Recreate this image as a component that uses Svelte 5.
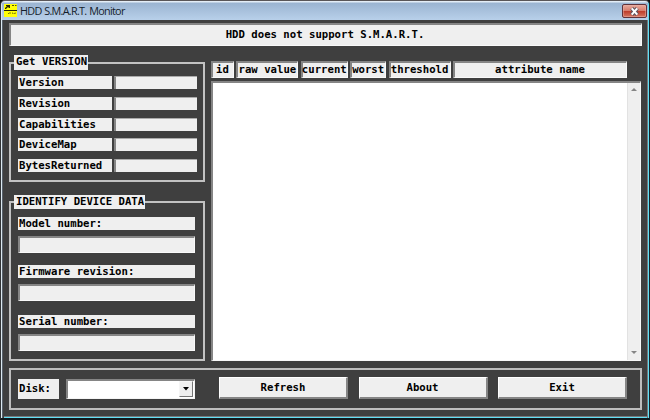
<script>
  const versionRows = ['Version', 'Revision', 'Capabilities', 'DeviceMap', 'BytesReturned'];
  const identity = ['Model number:', 'Firmware revision:', 'Serial number:'];
  const columns = ['id', 'raw value', 'current', 'worst', 'threshold', 'attribute name'];
  const buttons = ['Refresh', 'About', 'Exit'];
</script>

<div class="window">
  <header>
    <svg class="logo" width="14" height="14" viewBox="0 0 14 14">
      <rect width="13" height="13" fill="#ffff08" />
      <path d="M0 6.5H13" stroke="#222200" />
      <path d="M2 1H6V4H5L4 3L2 5H1V4L3 2H2Z" fill="#282800" />
      <path d="M8 1.5H10M11 1.5H12.5" stroke="#555500" />
      <path d="M4 10L5 9H7M8 9H9V10M10 9.5L12 9" fill="none" stroke="#77770a" />
    </svg>
    <span class="title">HDD S.M.A.R.T. Monitor</span>
    <button class="close" aria-label="Close">
      <svg width="11" height="9" viewBox="0 0 11 9">
        <path d="M2.7 1.4L8.3 7.6M8.3 1.4L2.7 7.6" stroke="#5c5560" stroke-width="4" />
        <path d="M2.7 1.4L8.3 7.6M8.3 1.4L2.7 7.6" stroke="#fff" stroke-width="2.1" />
      </svg>
    </button>
  </header>
  <main>
    <div class="status sunken">HDD does not support S.M.A.R.T.</div>
    <div class="middle">
      <div class="left">
        <section class="group version">
          <h2>Get VERSION</h2>
          {#each versionRows as row}
            <div class="row">
              <span class="label">{row}</span>
              <span class="value"></span>
            </div>
          {/each}
        </section>
        <section class="group identify">
          <h2>IDENTIFY DEVICE DATA</h2>
          {#each identity as name}
            <div class="item">
              <div class="label">{name}</div>
              <div class="field sunken"></div>
            </div>
          {/each}
        </section>
      </div>
      <div class="right">
        <div class="columns">
          {#each columns as column}
            <div class="sunken">{column}</div>
          {/each}
        </div>
        <div class="list sunken">
          <div class="scrollbar">
            <svg width="6" height="3" viewBox="0 0 6 3"><path d="M0 3L3 0L6 3Z" fill="#858585" /></svg>
            <svg width="6" height="3" viewBox="0 0 6 3"><path d="M0 0H6L3 3Z" fill="#858585" /></svg>
          </div>
        </div>
      </div>
    </div>
    <footer>
      <span class="disk">Disk:</span>
      <div class="combo">
        <span class="arrow">
          <svg width="6" height="4" viewBox="0 0 6 4"><path d="M0 0H6L3 3.6Z" fill="#000" /></svg>
        </span>
      </div>
      <div class="actions">
        {#each buttons as text}
          <button>{text}</button>
        {/each}
      </div>
    </footer>
  </main>
</div>

<style>
  :global(body) {
    margin: 0;
    background: #111;
  }
  * {
    box-sizing: border-box;
  }
  .window {
    width: 650px;
    height: 420px;
    display: flex;
    flex-direction: column;
    border: 1px solid #303335;
    border-top-color: #5a5658;
    border-bottom: 2px solid #10191d;
    border-right-color: #10272f;
    border-radius: 5px 5px 0 0;
    background: #3f3f3f;
    overflow: hidden;
    font: bold 10.65px/13px 'DejaVu Sans Mono', monospace;
    color: #000;
  }
  header {
    flex: none;
    height: 19px;
    padding: 0 3px;
    display: flex;
    align-items: flex-start;
    background: linear-gradient(#e4edf6 0 1px, #9bb4d1 2px, #b8d0ea);
    border-left: 1px solid #dbe8f4;
    border-right: 1px solid #60dcf5;
  }
  .logo {
    flex: none;
    margin: 3px 0 0 -1px;
  }
  .title {
    margin: 2px 0 0 2px;
    font: 10.8px/15px 'Open Sans', 'Noto Sans', sans-serif;
    letter-spacing: -0.7px;
    word-spacing: 0.6px;
    color: #151d2b;
    flex: 1;
  }
  .close {
    width: 25px;
    height: 14px;
    margin: 3px -2px 0 0;
    padding: 0;
    display: flex;
    align-items: center;
    justify-content: center;
    border: 1px solid #60323a;
    border-radius: 2px;
    background: linear-gradient(#e8aa9d, #d77c6c 48%, #bd3b2a 52%, #d47761);
    box-shadow: inset 0 0 0 1px #e9b0a680;
  }
  main {
    flex: 1;
    padding: 3px 6px 7px 5px;
    border-left: 3px solid #686d72;
    border-image: linear-gradient(to right, #dce9f1 0 1px, #57606a 1px 2px, #3f3f3f 2px) 0 0 0 3;
    box-shadow: inset -1px 0 #62dff4, inset -2px 0 #77777a, inset 0 -1px #62dff4, inset 0 -2px #77777a;
    display: flex;
    flex-direction: column;
  }
  .sunken {
    background: #efefef;
    border: 2px solid;
    border-color: #858585 #f9f9f9 #f9f9f9 #858585;
    border-right-width: 1px;
    border-bottom-width: 1px;
  }
  .status {
    height: 23px;
    text-align: center;
    line-height: 20px;
    flex: none;
    margin-right: 1px;
    padding-right: 2px;
  }
  .middle {
    display: flex;
    gap: 6px;
    margin-top: 9px;
    height: 306px;
    flex: none;
  }
  .left {
    width: 196px;
    display: flex;
    flex-direction: column;
    gap: 12px;
  }
  .group {
    margin-top: 7px;
    border: 2px solid #c2c2c2;
    padding: 0 7px;
  }
  .version {
    height: 120px;
  }
  .identify {
    height: 160px;
  }
  h2 {
    width: max-content;
    height: 15px;
    margin: -9px 0 6px -4px;
    padding: 0 1px 0 2px;
    background: #efefef;
    font: inherit;
    line-height: 14px;
  }
  .version h2 {
    letter-spacing: 0.07px;
  }
  .label {
    display: block;
    height: 13px;
    padding-left: 1px;
    line-height: 13.5px;
    background: #efefef;
  }
  .row {
    display: grid;
    grid-template-columns: 94px 83px;
    gap: 2px;
    margin-bottom: 7.8px;
    width: 179px;
  }
  .value {
    height: 13px;
    background: #efefef;
    border-top: 1px solid #aaa;
    border-left: 2px solid #858585;
  }
  .identify h2 {
    height: 14px;
    margin: -8px 0 8px -4px;
  }
  .item {
    width: 177px;
    height: 48px;
  }
  .item:nth-of-type(2) {
    height: 50px;
  }
  .field {
    margin-top: 6px;
    height: 17px;
  }
  .right {
    padding-top: 6px;
    width: 430px;
    display: flex;
    flex-direction: column;
    gap: 3px;
  }
  .columns {
    display: grid;
    grid-template-columns: 23px 62px 47px 36px 62px 174px;
    column-gap: 2.4px;
    height: 17px;
    text-align: center;
    white-space: nowrap;
  }
  .columns div {
    line-height: 14px;
    display: flex;
    justify-content: center;
    padding-right: 1px;
  }
  .list {
    flex: 1;
    background: #fff;
    display: flex;
    justify-content: flex-end;
  }
  .scrollbar {
    width: 13px;
    padding: 5px 0 6px;
    display: flex;
    flex-direction: column;
    justify-content: space-between;
    align-items: center;
    background: #efefef;
    border-left: 1px solid #e2e2e2;
  }
  footer {
    margin: 7px 1px 0 0;
    height: 42px;
    flex: none;
    border: 2px solid #bdbdbd;
    padding: 7px 12px 0 7px;
    display: flex;
  }
  .disk {
    width: 41px;
    height: 20px;
    margin-top: 2px;
    padding-left: 1px;
    background: #efefef;
    line-height: 19px;
  }
  .combo {
    width: 129px;
    height: 20px;
    margin: 2px 24px 0 7px;
    background: #fff;
    border: 2px solid #858585;
    border-right: 1px solid #f5f5f5;
    border-bottom: 1px solid #f5f5f5;
    display: flex;
    justify-content: flex-end;
  }
  .arrow {
    width: 14px;
    height: 16px;
    margin-right: 1px;
    background: #efefef;
    border: 1px solid #f5f5f5;
    border-right-color: #777;
    border-bottom-color: #777;
    display: flex;
    align-items: center;
    justify-content: center;
  }
  .actions {
    display: grid;
    grid-template-columns: repeat(3, 129px);
    gap: 10.5px;
  }
  .actions button {
    height: 22px;
    padding: 0;
    font: inherit;
    color: #000;
    background: #efefef;
    border: 1px solid #fff;
    border-right: 2px solid #858585;
    border-bottom: 2px solid #858585;
    border-radius: 0;
  }
</style>
